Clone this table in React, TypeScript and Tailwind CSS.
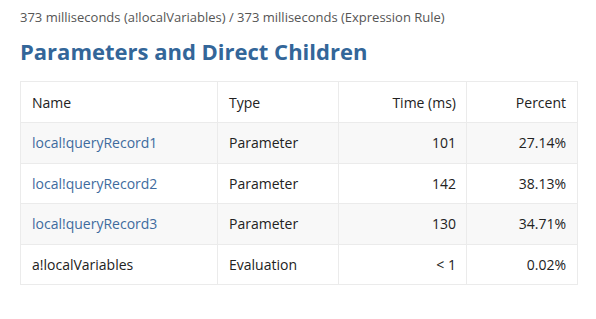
import React from "react";

const rows = [
  { name: "local!queryRecord1", link: true, type: "Parameter", time: "101", pct: "27.14%" },
  { name: "local!queryRecord2", link: true, type: "Parameter", time: "142", pct: "38.13%" },
  { name: "local!queryRecord3", link: true, type: "Parameter", time: "130", pct: "34.71%" },
  { name: "a!localVariables", link: false, type: "Evaluation", time: "< 1", pct: "0.02%" },
];

export default function App() {
  return (
    <div
      className="w-[596px] h-[319px] bg-white px-[20px] pt-[8px]"
      style={{ fontFamily: '"Open Sans", sans-serif' }}
    >
      <div className="text-[13px] leading-[18px] text-[#555555]">
        373 milliseconds (a!localVariables) / 373 milliseconds (Expression Rule)
      </div>
      <h2 className="mt-[10px] text-[22px] leading-[30px] font-bold text-[#336699]">
        Parameters and Direct Children
      </h2>
      <table className="mt-[15px] w-[557px] border-collapse text-[14px] text-[#222222] table-fixed">
        <colgroup>
          <col className="w-[197px]" />
          <col className="w-[121px]" />
          <col className="w-[128px]" />
          <col className="w-[111px]" />
        </colgroup>
        <thead>
          <tr className="h-[41px]">
            <th className="border border-[#ebebeb] px-[11px] text-left font-medium">Name</th>
            <th className="border border-[#ebebeb] px-[11px] text-left font-medium">Type</th>
            <th className="border border-[#ebebeb] px-[10px] text-right font-medium">Time (ms)</th>
            <th className="border border-[#ebebeb] px-[11px] text-right font-medium">Percent</th>
          </tr>
        </thead>
        <tbody>
          {rows.map((r, i) => (
            <tr key={i} className={`h-[40.5px] ${i % 2 === 0 ? "bg-[#f8f8f8]" : "bg-white"}`}>
              <td className={`border border-[#ebebeb] px-[11px] ${r.link ? "text-[#3e6b9e]" : ""}`}>{r.name}</td>
              <td className="border border-[#ebebeb] px-[11px]">{r.type}</td>
              <td className="border border-[#ebebeb] px-[10px] text-right">{r.time}</td>
              <td className="border border-[#ebebeb] px-[11px] text-right">{r.pct}</td>
            </tr>
          ))}
        </tbody>
      </table>
    </div>
  );
}
